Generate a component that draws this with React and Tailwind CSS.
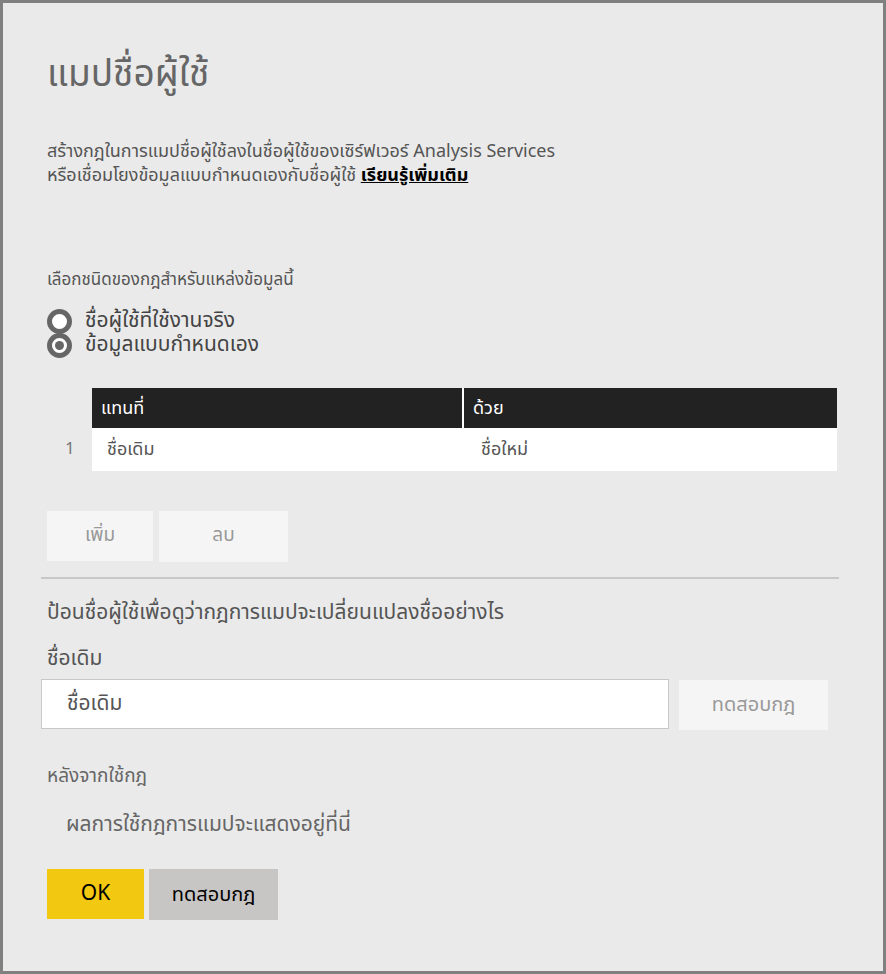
import React from 'react';

const FONT = "font-['Noto_Sans_Thai','Noto_Sans','Leelawadee_UI','DejaVu_Sans',sans-serif]";

export default function App() {
  return (
    <div className={`w-[886px] h-[974px] bg-[#eaeaea] border-[3px] border-[#808080] ${FONT}`}>
      <div className="pl-[44px] pr-[44px] pt-[46px]">
        <h1 className="text-[37px] leading-[52px] text-[#666]">แมปชื่อผู้ใช้</h1>

        <p className="mt-[39px] text-[18px] leading-[24px] text-[#555]">
          สร้างกฎในการแมปชื่อผู้ใช้ลงในชื่อผู้ใช้ของเซิร์ฟเวอร์ Analysis Services
          <br />
          หรือเชื่อมโยงข้อมูลแบบกำหนดเองกับชื่อผู้ใช้{' '}
          <a className="font-bold text-black underline">เรียนรู้เพิ่มเติม</a>
        </p>

        <div className="mt-[80px] text-[17px] leading-[24px] text-[#555]">เลือกชนิดของกฎสำหรับแหล่งข้อมูลนี้</div>

        {/* rule type radios */}
        <div className="mt-[17px] flex flex-col">
          <label className="flex items-center gap-[13px] h-[24px]">
            <span className="w-[25px] h-[25px] rounded-full border-[5px] border-[#666] bg-white" />
            <span className="text-[21px] text-[#444]">ชื่อผู้ใช้ที่ใช้งานจริง</span>
          </label>
          <label className="flex items-center gap-[13px] h-[24px]">
            <span className="w-[25px] h-[25px] rounded-full border-[5px] border-[#666] bg-white flex items-center justify-center">
              <span className="w-[9px] h-[9px] rounded-full bg-[#666]" />
            </span>
            <span className="text-[21px] text-[#444]">ข้อมูลแบบกำหนดเอง</span>
          </label>
        </div>

        {/* mapping table */}
        <div className="mt-[31px] flex">
          <div className="w-[45px] flex flex-col">
            <div className="h-[40px]" />
            <div className="h-[43px] flex items-center pl-[18px] text-[17px] text-[#777]">1</div>
          </div>
          <div className="flex-1 mr-[2px]">
            <div className="flex h-[40px] bg-[#222] text-white text-[18px]">
              <div className="w-[372px] flex items-center pl-[9px] border-r-2 border-white">แทนที่</div>
              <div className="flex-1 flex items-center pl-[9px]">ด้วย</div>
            </div>
            <div className="flex h-[43px] bg-white text-[18px] text-[#555]">
              <div className="w-[374px] flex items-center pl-[15px]">ชื่อเดิม</div>
              <div className="flex-1 flex items-center pl-[15px]">ชื่อใหม่</div>
            </div>
          </div>
        </div>

        <div className="mt-[40px] flex gap-[6px]">
          <button className="w-[106px] h-[50px] bg-[#f5f5f5] text-[19px] text-[#999]">เพิ่ม</button>
          <button className="w-[129px] h-[51px] bg-[#f5f5f5] text-[19px] text-[#999]">ลบ</button>
        </div>

        <div className="mt-[15px] -ml-[6px] mr-0 h-[2px] bg-[#c8c8c8]" />

        <div className="mt-[19px] text-[21px] leading-[30px] text-[#555]">ป้อนชื่อผู้ใช้เพื่อดูว่ากฎการแมปจะเปลี่ยนแปลงชื่ออย่างไร</div>
        <div className="mt-[16px] text-[21px] leading-[30px] text-[#555]">ชื่อเดิม</div>

        <div className="mt-[5px] -ml-[6px] flex gap-[10px]">
          <div className="w-[628px] h-[50px] bg-white border border-[#c8c8c8] flex items-center pl-[25px] text-[21px] text-[#555]">ชื่อเดิม</div>
          <button className="w-[149px] h-[50px] mt-[1px] bg-[#f5f5f5] text-[20px] text-[#999]">ทดสอบกฎ</button>
        </div>

        <div className="mt-[33px] text-[19px] leading-[28px] text-[#666]">หลังจากใช้กฎ</div>
        <div className="mt-[20px] pl-[19px] text-[21px] leading-[28px] text-[#666]">ผลการใช้กฎการแมปจะแสดงอยู่ที่นี่</div>

        <div className="mt-[30px] flex gap-[5px]">
          <button className="w-[97px] h-[50px] bg-[#f2c811] text-[21px] text-black">OK</button>
          <button className="w-[129px] h-[51px] bg-[#c8c6c4] text-[20px] text-black">ทดสอบกฎ</button>
        </div>
      </div>
    </div>
  );
}
